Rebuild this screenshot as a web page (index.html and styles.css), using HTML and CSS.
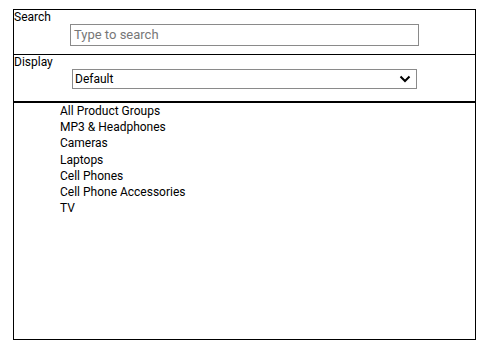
FILE: index.html
```html
<!DOCTYPE html>
<html>
<head>
<meta charset="utf-8">
<link rel="stylesheet" href="styles.css">
</head>
<body>
<div class="frame">
  <div class="section search">
    <div class="label">Search</div>
    <div class="input">Type to search</div>
  </div>
  <div class="section display">
    <div class="label">Display</div>
    <div class="select">
      <span>Default</span>
      <svg width="12" height="8" viewBox="0 0 12 8"><path d="M1.5 1.5 L6 6 L10.5 1.5" fill="none" stroke="#000" stroke-width="2"/></svg>
    </div>
  </div>
  <ul class="list">
    <li>All Product Groups</li>
    <li>MP3 &amp; Headphones</li>
    <li>Cameras</li>
    <li>Laptops</li>
    <li>Cell Phones</li>
    <li>Cell Phone Accessories</li>
    <li>TV</li>
  </ul>
</div>
</body>
</html>
```
FILE: styles.css
```css
html, body {
  margin: 0;
  padding: 0;
  background: #fff;
}
body {
  font-family: Roboto, "Liberation Sans", sans-serif;
  font-size: 12px;
  color: #000;
}
.frame {
  margin: 9px 0 0 13px;
  width: 461px;
  height: 329px;
  border: 1px solid #000;
  display: flex;
  flex-direction: column;
}
.section {
  display: flex;
  flex-direction: column;
  align-items: flex-start;
}
.label {
  line-height: 14px;
  font-size: 12px;
}
.search {
  height: 44px;
  border-bottom: 1px solid #000;
}
.input {
  box-sizing: border-box;
  margin-left: 56px;
  width: 349px;
  height: 22px;
  border: 1px solid #8a8a8a;
  padding-left: 3px;
  font-size: 13px;
  line-height: 20px;
  color: #777;
}
.display {
  height: 46px;
  border-bottom: 2px solid #000;
}
.select {
  box-sizing: border-box;
  margin-left: 58px;
  width: 345px;
  height: 20px;
  border: 1px solid #8a8a8a;
  display: flex;
  align-items: center;
  justify-content: space-between;
  padding: 0 5px 0 2px;
  font-size: 12px;
}
.select svg {
  display: block;
}
.list {
  list-style: none;
  margin: 0;
  padding: 0 0 0 46px;
}
.list li {
  line-height: 16.2px;
  font-size: 12px;
}
```
